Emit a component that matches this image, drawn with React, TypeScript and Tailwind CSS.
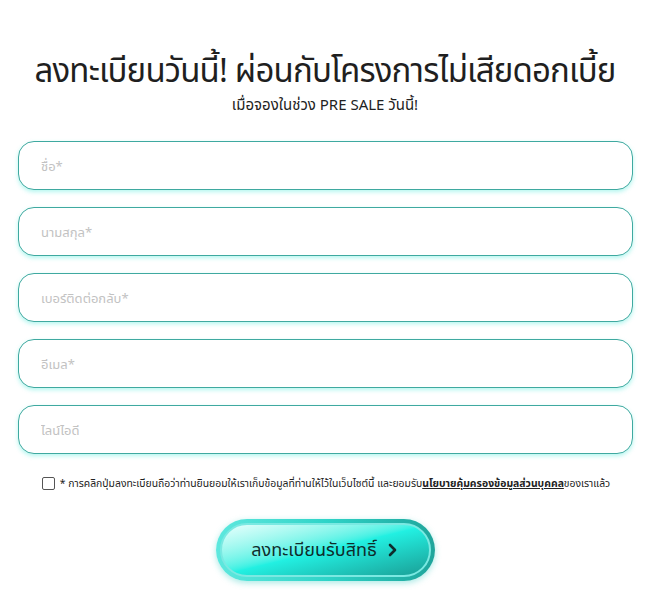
import React from 'react';

const fields = ['ชื่อ*', 'นามสกุล*', 'เบอร์ติดต่อกลับ*', 'อีเมล*', 'ไลน์ไอดี'];

export default function App() {
  return (
    <div
      className="w-[650px] h-[613px] bg-white flex flex-col items-center"
      style={{ fontFamily: '"Noto Sans", "Noto Sans Thai", "Liberation Sans", sans-serif' }}
    >
      <h1 className="mt-[48px] text-[33px] leading-[44px] text-[#1f1f1f] tracking-tight whitespace-nowrap">
        ลงทะเบียนวันนี้! ผ่อนกับโครงการไม่เสียดอกเบี้ย
      </h1>
      <p className="mt-[2px] text-[15px] leading-[20px] text-[#222]">เมื่อจองในช่วง PRE SALE วันนี้!</p>

      <form className="mt-[27px] w-full px-[18px] flex flex-col gap-[17px]">
        {fields.map((f) => (
          <input
            key={f}
            placeholder={f}
            className="h-[49px] w-[615px] rounded-[16px] border border-[#3fa9a0] bg-white px-[22px] text-[13px] text-[#333] placeholder:text-[#c2c2c2] shadow-[0_2px_4px_rgba(40,230,210,0.35)] outline-none"
          />
        ))}
      </form>

      <label className="mt-[22px] ml-[2px] flex items-center gap-[5px] text-[10.4px] text-[#222] whitespace-nowrap">
        <span className="w-[13px] h-[13px] rounded-[2px] border border-[#555] bg-white shrink-0" />
        <span>
          * การคลิกปุ่มลงทะเบียนถือว่าท่านยินยอมให้เราเก็บข้อมูลที่ท่านให้ไว้ในเว็บไซต์นี้ และยอมรับ
          <span className="underline font-bold">นโยบายคุ้มครองข้อมูลส่วนบุคคล</span>ของเราแล้ว
        </span>
      </label>

      <div className="mt-[27px] rounded-full p-[4px] bg-gradient-to-r from-[#5de8de] via-[#2fd4c8] to-[#1fa59b] shadow-[0_2px_6px_rgba(40,200,190,0.4)]">
        <button
          type="button"
          className="w-[211px] h-[54px] rounded-full border-[2px] border-[#7ae9e2] bg-gradient-to-br from-[#e6fffd] via-[#22f0e2] to-[#1a9f96] flex items-center justify-center gap-[10px] text-[18px] text-[#0f2c2b]"
        >
          ลงทะเบียนรับสิทธิ์
          <svg width="12" height="14" viewBox="0 0 12 14" fill="none">
            <path d="M3 2l5 5-5 5" stroke="#0f2c2b" strokeWidth="2.6" strokeLinecap="round" strokeLinejoin="round" />
          </svg>
        </button>
      </div>
    </div>
  );
}
